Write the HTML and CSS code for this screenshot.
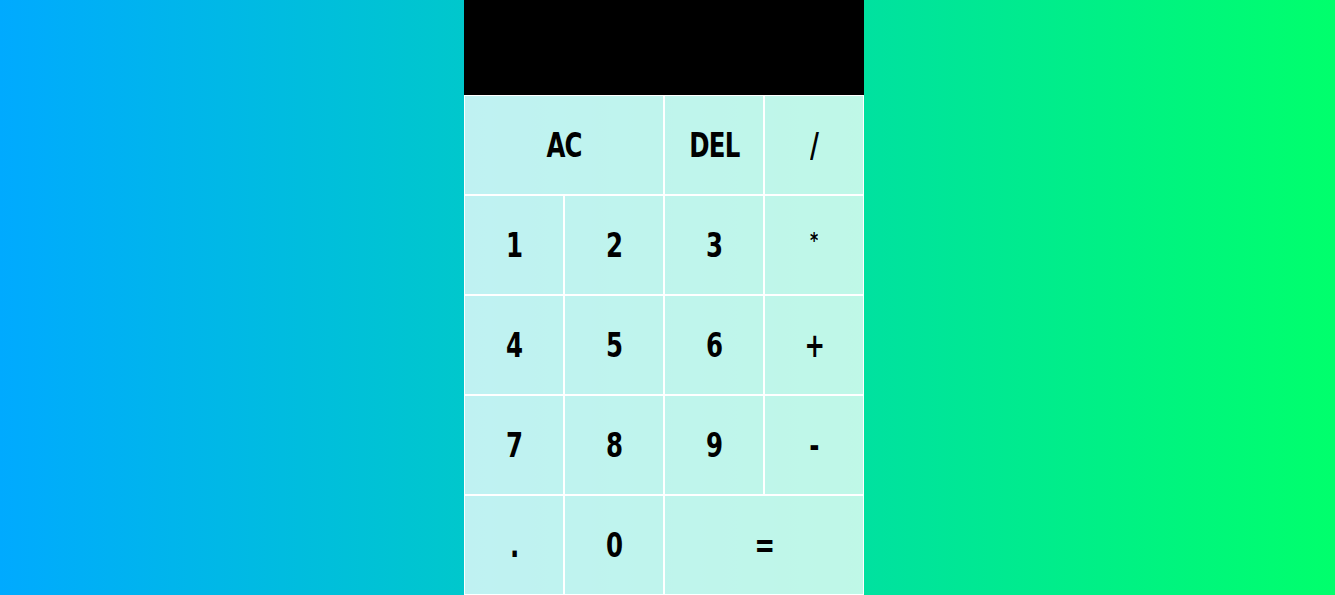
FILE: index.html
```html
<!DOCTYPE html>
<html>
<head>
<meta charset="utf-8">
<link rel="stylesheet" href="styles.css">
</head>
<body>
<div class="calculator">
  <div class="output"></div>
  <button class="span-two"><span class="label">AC</span></button>
  <button><span class="label">DEL</span></button>
  <button><span class="label">/</span></button>
  <button><span class="label">1</span></button>
  <button><span class="label">2</span></button>
  <button><span class="label">3</span></button>
  <button class="op-star"><span class="label">*</span></button>
  <button><span class="label">4</span></button>
  <button><span class="label">5</span></button>
  <button><span class="label">6</span></button>
  <button><span class="label">+</span></button>
  <button><span class="label">7</span></button>
  <button><span class="label">8</span></button>
  <button><span class="label">9</span></button>
  <button><span class="label">-</span></button>
  <button><span class="label">.</span></button>
  <button><span class="label">0</span></button>
  <button class="span-two"><span class="label">=</span></button>
</div>
</body>
</html>
```
FILE: styles.css
```css
* { box-sizing: border-box; }
html, body { height: 100%; }
body {
  margin: 0;
  overflow: hidden;
  background: linear-gradient(to right, #00aaff, #00ff6c);
}
.calculator {
  display: grid;
  grid-template-columns: repeat(4, 100px);
  grid-template-rows: 95px repeat(5, 100px);
  width: 400px;
  margin-left: 464px;
}
.output {
  grid-column: 1 / -1;
  background: #000;
}
.calculator button {
  font-family: "DejaVu Sans Condensed", "DejaVu Sans", sans-serif;
  font-weight: bold;
  font-size: 34px;
  letter-spacing: -1px;
  color: #000;
  border: 1px solid #fff;
  outline: none;
  background: rgba(255, 255, 255, 0.75);
  padding: 0;
  margin: 0;
}
.calculator .label {
  display: inline-block;
  transform: scaleX(0.8);
}
.calculator .span-two { grid-column: span 2; }
.calculator .op-star { font-size: 22px; padding-bottom: 10px; }
```
